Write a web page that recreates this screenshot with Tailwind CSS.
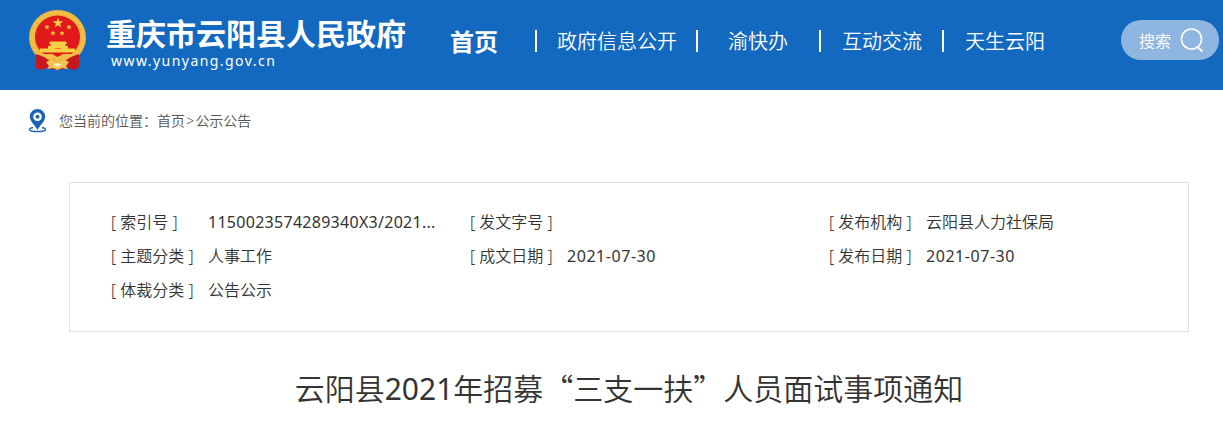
<!DOCTYPE html>
<html lang="zh-CN">
<head>
    <meta charset="UTF-8">
    <meta name="viewport" content="width=device-width, initial-scale=1.0">
    <title>云阳县2021年招募“三支一扶”人员面试事项通知</title>
    <script src="https://cdn.jsdelivr.net/npm/@tailwindcss/browser@4"></script>
</head>
<body class="bg-white text-[#333] font-['Noto_Sans','Noto_Sans_CJK_SC',sans-serif]">
    <!-- Header -->
    <header class="flex h-[90px] bg-[#1369c0] pl-7 pr-1 text-white">
        <a href="#" class="flex shrink-0">
            <svg class="mt-[9px] h-[62px] w-[59px]" viewBox="0 0 59 62">
                <path d="M8 42 L8 59 Q13 62 18 59 L29 61 L41 59 Q46 62 50 59 L50 42Z" fill="#c8161d"/>
                <ellipse cx="29.500" cy="28.500" rx="28.500" ry="27.500" fill="#efb73e"/>
                <ellipse cx="29.500" cy="28.500" rx="25.500" ry="25" fill="none" stroke="#f3c450" stroke-width="2" stroke-dasharray="3 2"/>
                <ellipse cx="29.500" cy="28" rx="22.500" ry="21.500" fill="#e1191b"/>
                <g fill="#f6cf45">
                    <path d="M30 8.500l1.300 3.800h4l-3.200 2.400 1.200 3.800-3.300-2.300-3.300 2.300 1.200-3.800-3.200-2.400h4z"/>
                    <path id="star" d="M19 15.500l.7 1.800h2l-1.500 1.200.5 1.900-1.700-1.100-1.700 1.100.5-1.900-1.500-1.200h2z"/>
                    <use href="#star" x="22"/>
                    <use href="#star" x="6" y="6"/>
                    <use href="#star" x="15" y="6"/>
                    <path d="M22 32.500h16l1 2.500h-1.500v2H40v3h-7v-1h-6v1h-7v-3h2.500v-2H21z"/>
                    <path d="M12 39.500h35v4H12z"/>
                </g>
                <path d="M10 45h14l5.500 3 5.500-3h14l-3 4H34l-4.500 2-4.500-2H13z" fill="#f2c04a"/>
                <path d="M8 45 Q19 48 22 53 L18 59 Q13 61 8 58Z M51 45 Q40 48 37 53 L41 59 Q46 61 51 58Z" fill="#c8161d"/>
                <path d="M18 53l5-2 6.500 3 6.500-3 5 2-3 4 2 3-6-1-4.500 2-4.500-2-6 1 2-3z" fill="#f0c453"/>
                <path d="M25 56l4.500-2 4.500 2-4.500 2z" fill="#fff0bd"/>
            </svg>
            <span class="ml-[19px] flex flex-col pt-3.5 whitespace-nowrap">
                <span class="text-[30px] leading-[37px] font-bold font-['Noto_Sans_CJK_SC',sans-serif]">重庆市云阳县人民政府</span>
                <span class="ml-[5px] pt-px text-sm leading-[18px] tracking-[1.45px]">www.yunyang.gov.cn</span>
            </span>
        </a>
        <nav class="ml-11 flex h-[82px] items-center text-xl whitespace-nowrap font-['Noto_Sans_CJK_SC',sans-serif]">
            <a href="#" class="text-2xl font-bold">首页</a>
            <i class="ml-[37px] h-[22px] w-0.5 bg-white"></i>
            <a href="#" class="ml-5 font-[350]">政府信息公开</a>
            <i class="ml-[19px] h-[22px] w-0.5 bg-white"></i>
            <a href="#" class="ml-[30px] font-[350]">渝快办</a>
            <i class="ml-[31px] h-[22px] w-0.5 bg-white"></i>
            <a href="#" class="ml-[21px] font-[350]">互动交流</a>
            <i class="ml-5 h-[22px] w-0.5 bg-white"></i>
            <a href="#" class="ml-[21px] font-[350]">天生云阳</a>
        </nav>
        <button class="mt-5 ml-auto flex h-10 w-[98px] items-center rounded-full bg-[#8fb6e1] pl-[18px]">
            <span class="text-base font-[350] font-['Noto_Sans_CJK_SC',sans-serif]">搜索</span>
            <svg class="ml-[9px] h-6 w-6" viewBox="0 0 24 24" fill="none" stroke="currentColor" stroke-width="1.600">
                <circle cx="11.500" cy="11" r="10"/>
                <path d="M17.500 19 L22.500 23.500" stroke-width="2"/>
            </svg>
        </button>
    </header>

    <!-- Breadcrumb -->
    <div class="flex h-[92px] pt-[19px] pl-7">
        <svg class="h-6 w-[19px]" viewBox="0 0 19 24">
            <path d="M5 18.500 Q1 19.300 1.500 20.800 Q2.500 22.500 9.500 22.500 Q16.500 22.500 17.500 20.800 Q18 19.300 14 18.500" fill="none" stroke="#1b64b4" stroke-width="1.400"/>
            <path fill-rule="evenodd" d="M9.500 0 A7.700 7.700 0 0 1 17.200 7.800 C17.200 12.500 12 16 9.500 21 C7 16 1.800 12.500 1.800 7.800 A7.700 7.700 0 0 1 9.500 0Z M9.500 3.500a4.300 4.300 0 1 0 0 8.600a4.300 4.300 0 1 0 0-8.600Z" fill="#1b64b4"/>
            <circle cx="9.500" cy="7.800" r="2" fill="#1b64b4"/>
        </svg>
        <p class="ml-3 text-sm leading-6 font-[350] text-[#555]">您当前的位置：<a href="#">首页</a><span class="px-[1.200px]">&gt;</span><a href="#">公示公告</a></p>
    </div>

    <!-- Document info -->
    <div class="ml-[69px] grid h-[150px] w-[1120px] grid-cols-[359px_359px_1fr] content-start border border-[#e1e1e1] pt-[22px] pl-[41px] text-base leading-[34px] font-[350] whitespace-nowrap">
        <div class="flex"><span class="w-[97px]">[ 索引号 ]</span><span class="font-normal tracking-[0.28px]">1150023574289340X3/2021...</span></div>
        <div class="flex"><span class="w-[97px]">[ 发文字号 ]</span></div>
        <div class="flex"><span class="w-[97px]">[ 发布机构 ]</span><span>云阳县人力社保局</span></div>
        <div class="flex"><span class="w-[97px]">[ 主题分类 ]</span><span>人事工作</span></div>
        <div class="flex"><span class="w-[97px]">[ 成文日期 ]</span><span class="font-normal tracking-[0.55px]">2021-07-30</span></div>
        <div class="flex"><span class="w-[97px]">[ 发布日期 ]</span><span class="font-normal tracking-[0.55px]">2021-07-30</span></div>
        <div class="flex"><span class="w-[97px]">[ 体裁分类 ]</span><span>公告公示</span></div>
    </div>

    <h1 class="mt-[34px] pl-[35px] text-center text-[30px] leading-[42px] font-[350] whitespace-nowrap font-['Noto_Sans_CJK_SC',sans-serif]">云阳县<span class="font-normal font-['Noto_Sans',sans-serif]">2021</span>年招募“三支一扶”人员面试事项通知</h1>
</body>
</html>
